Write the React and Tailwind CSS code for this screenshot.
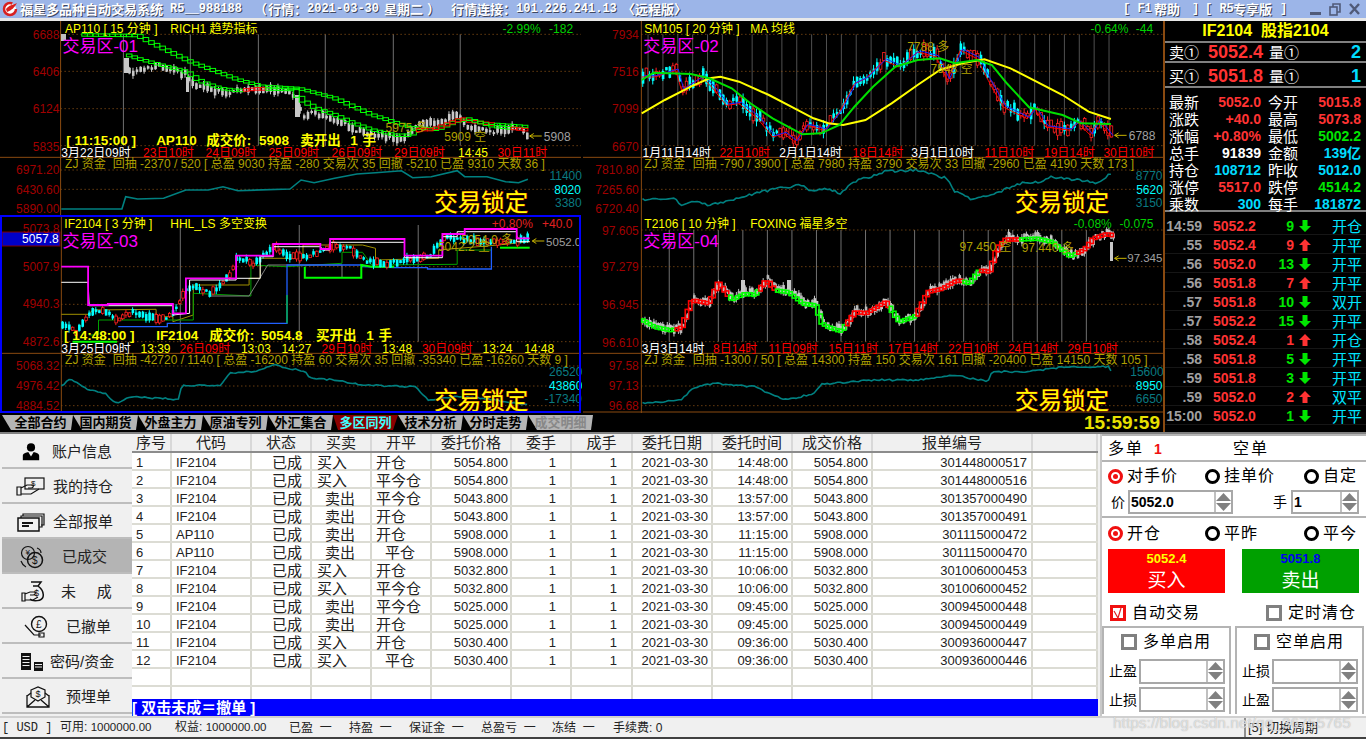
import React from 'react';

const FONT = "font-['Liberation_Sans','Noto_Sans_CJK_SC',sans-serif]";

// price paths are noted in crop coordinates: x / 2.69, y / 3
const pt = ([x, y]) => [x / 2.69, y / 3];
const line = (path) => path.map(pt).map(([x, y]) => `${x.toFixed(1)},${y.toFixed(1)}`).join(' ');

const rand = (seed) => {
  let s = seed;
  return () => {
    s = (s * 16807) % 2147483647;
    return s / 2147483647;
  };
};

const at = (path, x) => {
  for (let i = 1; i < path.length; i++) {
    if (x <= path[i][0]) {
      const [x0, y0] = path[i - 1];
      const [x1, y1] = path[i];
      return y0 + ((y1 - y0) * (x - x0)) / (x1 - x0 || 1);
    }
  }
  return path[path.length - 1][1];
};

const wiggle = (path, step, amp, seed) => {
  const r = rand(seed);
  const out = [];
  for (let x = path[0][0]; x <= path[path.length - 1][0]; x += step) {
    out.push([x, at(path, x) + (r() - 0.5) * amp]);
  }
  return out;
};

const Candles = ({ path, step, spread, body, seed, colors, hollow, bias = 0.5 }) => {
  const r = rand(seed);
  const items = [];
  for (let x = path[0][0]; x <= path[path.length - 1][0]; x += step) {
    const up = r() > bias;
    const mid = at(path, x) + (r() - 0.5) * spread;
    const h = 1 + r() * body;
    const wick = h + r() * body;
    const c = up ? colors[0] : colors[1];
    const px = x / 2.69;
    const py = mid / 3;
    items.push(
      <g key={x}>
        <line x1={px + 1} x2={px + 1} y1={py - wick} y2={py + wick} stroke={c} />
        <rect x={px} y={py - h} width={2.6} height={h * 2} fill={up && hollow ? '#000' : c} stroke={up && hollow ? c : 'none'} strokeWidth={0.8} />
      </g>
    );
  }
  return <g>{items}</g>;
};

const Ladder = ({ path, step, colorAt, h = 2.5, weight = 1 }) => {
  const items = [];
  for (let x = path[0][0]; x < path[path.length - 1][0]; x += step) {
    const y0 = at(path, x) / 3;
    const y1 = at(path, x + step) / 3;
    items.push(
      <rect key={x} x={x / 2.69} y={Math.min(y0, y1) - 1} width={step / 2.69} height={Math.max(h, Math.abs(y1 - y0) + 1)} fill="none" stroke={colorAt(x)} strokeWidth={weight} />
    );
  }
  return <g>{items}</g>;
};

const T = ({ x, y, fill = '#ffff00', size = 12, bold, anchor, children }) => (
  <text x={x / 2.69} y={y / 3} fill={fill} fontSize={size} fontWeight={bold ? 700 : 400} textAnchor={anchor} dominantBaseline="central">
    {children}
  </text>
);

const Lock = ({ x, y }) => (
  <text x={x / 2.69} y={y / 3} fontSize={23.5} fill="#ffff00" stroke="#e01000" strokeWidth={0.7} paintOrder="stroke" dominantBaseline="central">
    交易锁定
  </text>
);

const Arrow = ({ x, y }) => (
  <g stroke="#c8b400" fill="none">
    <line x1={x / 2.69} x2={x / 2.69 + 12} y1={y / 3} y2={y / 3} />
    <path d={`M${x / 2.69 + 4} ${y / 3 - 2.5}L${x / 2.69} ${y / 3}L${x / 2.69 + 4} ${y / 3 + 2.5}`} />
  </g>
);

const GREEN = '#00ff00';
const RED = '#ff0000';
const AXIS = '#a00000';
const OLIVE = '#b0a000';
const TEAL = '#008080';
const BROWN = '#8a4a10';
const TEAL_TXT = '#0a7a80';

const Frame = ({ axisX, sep, bottom, right, grid, lowGrid, vLines, vTop, vBottom, vColor = '#707070' }) => (
  <g>
    {vLines.map((x) => (
      <line key={x} x1={x / 2.69} x2={x / 2.69} y1={vTop / 3} y2={vBottom / 3} stroke={vColor} />
    ))}
    {[...grid, ...lowGrid].map((y) => (
      <line key={y} x1={axisX / 2.69} x2={right} y1={y / 3} y2={y / 3} stroke="#9a5a18" strokeDasharray="1 3" />
    ))}
    <line x1={axisX / 2.69} x2={axisX / 2.69} y1={0} y2={bottom} stroke={BROWN} />
    <line x1={0} x2={right} y1={sep / 3} y2={sep / 3} stroke={BROWN} />
  </g>
);

const Dates = ({ items, y }) => items.map(([x, s, c]) => <T key={s + x} x={x} y={y} fill={c} size={12}>{s}</T>);
const AxisLabels = ({ items, x }) => items.map(([s, y]) => <T key={s} x={x} y={y} fill={AXIS} anchor="end">{s}</T>);

const Pane1 = () => {
  const price = [[335, 190], [350, 215], [380, 205], [420, 195], [470, 215], [500, 225], [515, 250], [560, 265], [600, 285], [640, 270], [700, 268], [760, 272], [790, 285], [810, 345], [850, 340], [880, 355], [930, 370], [950, 395], [1000, 400], [1060, 415], [1100, 405], [1130, 365], [1180, 375], [1220, 340], [1260, 380], [1320, 395], [1390, 380], [1420, 405]];
  const upper = [[220, 104], [370, 106], [400, 125], [510, 185], [640, 240], [700, 258], [800, 265], [900, 295], [1000, 345], [1100, 382], [1180, 388], [1240, 360], [1320, 372], [1420, 380]];
  const lower = [[340, 165], [380, 180], [430, 195], [500, 215], [540, 245], [590, 265], [640, 272], [700, 266], [790, 268], [810, 300], [850, 325], [900, 345], [950, 370], [1000, 390], [1060, 405], [1105, 405], [1130, 388], [1170, 388], [1250, 355], [1320, 378], [1420, 390]];
  return (
    <svg viewBox="0 21 582 194" className="block w-[582px] h-[194px] bg-black">
      <Frame axisX={163} sep={472} bottom={215} right={581} grid={[103, 214, 326, 437]} lowGrid={[510, 568]} vLines={[332, 512, 695, 875, 1058, 1238]} vTop={103} vBottom={437} />
      <rect x={61} y={34} width={5} height={7} fill="#c0c0c0" />
      <Candles path={price} step={10} spread={14} body={3} seed={77} colors={['#c8c8c8', '#c8c8c8']} />
      <rect x={124} y={58} width={5} height={15} fill="#c8c8c8" />
      <rect x={186} y={77} width={3} height={15} fill="#c8c8c8" />
      <rect x={295} y={95} width={5} height={22} fill="#c8c8c8" />
      <Ladder path={upper} step={15} colorAt={(x) => (x > 1240 && x < 1320 ? RED : GREEN)} />
      <Ladder path={lower} step={15} colorAt={(x) => ((x > 645 && x < 705) || (x > 1105 && x < 1250) || (x > 1370 && x < 1410) ? RED : GREEN)} />
      <T x={175} y={88}>AP110 [ 15 分钟 ]</T>
      <T x={458} y={88}>RICH1 趋势指标</T>
      <T x={1352} y={88} fill="#00d000">-2.99%</T>
      <T x={1477} y={88} fill="#00d000">-182</T>
      <AxisLabels x={160} items={[['6688', 105], ['6406', 216], ['6124', 328], ['5835', 441], ['6971.20', 510], ['6430.60', 570], ['5890.00', 627]]} />
      <T x={168} y={140} fill="#ff00ff" size={17}>交易区-01</T>
      <T x={1037} y={385} fill={OLIVE}>5975 多</T>
      <T x={1195} y={410} fill={OLIVE}>5909 空</T>
      <Arrow x={1425} y={408} />
      <T x={1463} y={411} fill="#a0a0a0">5908</T>
      <T x={178} y={420} size={13.5} bold>[ 11:15:00 ]</T>
      <T x={420} y={420} size={13.5} bold>AP110</T>
      <T x={555} y={420} size={13.5} bold>成交价:</T>
      <T x={697} y={420} size={13.5} bold>5908</T>
      <T x={808} y={420} size={13.5} bold>卖开出</T>
      <T x={942} y={420} size={13.5} bold>1</T>
      <T x={975} y={420} size={13.5} bold>手</T>
      <Dates y={460} items={[[165, '3月22日09时', '#fff'], [385, '23日10时', RED], [553, '24日09时', RED], [722, '25日09时', RED], [892, '26日09时', RED], [1060, '29日09时', RED], [1232, '14:45', '#ffff00'], [1338, '30日11时', RED]]} />
      <T x={175} y={492} fill={OLIVE}>ZJ 资金</T>
      <T x={303} y={492} fill={OLIVE}>回抽 -2370 / 520 [ 总盈 9030  持盈 -280  交易次 35  回撤 -5210  已盈 9310  天数 36 ]</T>
      <polyline points={line([[165, 627], [328, 627], [338, 590], [370, 597], [440, 595], [500, 570], [560, 570], [600, 560], [640, 572], [780, 567], [810, 540], [845, 548], [900, 535], [960, 522], [1010, 518], [1080, 512], [1110, 533], [1160, 530], [1230, 512], [1250, 530], [1310, 530], [1360, 545], [1395, 548], [1420, 538]])} fill="none" stroke={TEAL} strokeWidth={1.6} />
      <T x={1478} y={528} fill={TEAL_TXT}>11400</T>
      <T x={1491} y={570} fill="#00ffff">8020</T>
      <T x={1493} y={608} fill={TEAL_TXT}>3380</T>
      <Lock x={1168} y={610} />
    </svg>
  );
};

const Pane2 = () => {
  const price = [[158, 225], [190, 225], [250, 205], [265, 265], [320, 225], [350, 260], [385, 310], [420, 305], [470, 350], [510, 405], [540, 395], [570, 420], [600, 370], [650, 385], [690, 330], [730, 245], [760, 230], [810, 175], [850, 195], [900, 150], [950, 165], [980, 235], [1015, 145], [1060, 170], [1090, 235], [1130, 315], [1195, 350], [1215, 320], [1245, 375], [1310, 385], [1330, 360], [1365, 400], [1385, 355], [1420, 405]];
  const shifted = price.map(([x, y]) => [x, y + 6]);
  const vLines = [];
  for (let x = 175; x < 1440; x += 40) vLines.push(x);
  return (
    <svg viewBox="-1 21 581 194" className="block w-[581px] h-[194px] bg-black">
      <Frame axisX={157} sep={472} bottom={215} right={581} grid={[103, 214, 326, 437]} lowGrid={[510, 568]} vLines={vLines} vTop={103} vBottom={437} vColor="#505050" />
      <Candles path={price} step={9} spread={20} body={5} seed={311} colors={['#ff2020', '#00ffff']} hollow bias={0.65} />
      <polyline points={line(shifted)} fill="none" stroke="#ff0000" />
      <polyline points={line(price.map(([x, y]) => [x + 6, y + 2]))} fill="none" stroke="#2020ff" />
      <polyline points={line([[158, 340], [220, 300], [290, 260], [340, 235], [370, 230], [420, 245], [500, 285], [560, 320], [620, 355], [660, 370], [700, 375], [760, 360], [830, 310], [900, 255], [960, 210], [1020, 190], [1080, 178], [1150, 205], [1220, 245], [1290, 285], [1360, 335], [1420, 357]])} fill="none" stroke="#ffff00" strokeWidth={2} />
      <polyline points={line([[158, 240], [190, 218], [290, 222], [340, 235], [400, 265], [450, 310], [510, 355], [560, 385], [590, 403], [640, 400], [690, 375], [730, 320], [780, 260], [840, 200], [900, 180], [960, 175], [1000, 190], [1060, 180], [1100, 195], [1140, 250], [1200, 322], [1290, 345], [1340, 370], [1420, 372]])} fill="none" stroke="#00e000" strokeWidth={2} />
      <T x={165} y={88}>SM105 [ 20 分钟 ]</T>
      <T x={450} y={88}>MA 均线</T>
      <T x={1365} y={88} fill="#00d000">-0.64%</T>
      <T x={1487} y={88} fill="#00d000">-44</T>
      <AxisLabels x={150} items={[['7934', 105], ['7516', 216], ['7099', 328], ['6670', 441], ['7810.80', 510], ['7265.60', 570], ['6720.40', 627]]} />
      <T x={162} y={138} fill="#ff00ff" size={17}>交易区-02</T>
      <T x={872} y={140} fill={OLIVE}>7788 多</T>
      <T x={935} y={208} fill={OLIVE}>7548 空</T>
      <Arrow x={1430} y={406} />
      <T x={1468} y={408} fill="#a0a0a0">6788</T>
      <Dates y={460} items={[[160, '1月11日14时', '#fff'], [367, '22日10时', RED], [528, '2月1日14时', '#fff'], [725, '18日14时', RED], [883, '3月1日10时', '#fff'], [1080, '11日10时', RED], [1240, '19日14时', RED], [1400, '30日10时', RED]]} />
      <T x={165} y={492} fill={OLIVE}>ZJ 资金</T>
      <T x={295} y={492} fill={OLIVE}>回抽 -790 / 3900 [ 总盈 7980  持盈 3790  交易次 33  回撤 -2960  已盈 4190  天数 173 ]</T>
      <polyline points={line(wiggle([[160, 600], [250, 595], [265, 620], [290, 605], [340, 615], [400, 600], [480, 575], [530, 565], [590, 555], [610, 575], [650, 565], [690, 580], [730, 545], [810, 515], [900, 510], [980, 535], [1000, 575], [1050, 600], [1120, 575], [1190, 545], [1230, 550], [1260, 530], [1340, 540], [1380, 550], [1420, 520]], 7, 8, 51))} fill="none" stroke={TEAL} strokeWidth={1.6} />
      <T x={1487} y={528} fill={TEAL_TXT}>8770</T>
      <T x={1488} y={570} fill="#00ffff">5620</T>
      <T x={1487} y={608} fill={TEAL_TXT}>3150</T>
      <Lock x={1162} y={610} />
    </svg>
  );
};

const Pane3 = () => {
  const price = [[165, 330], [200, 350], [240, 290], [290, 290], [310, 320], [350, 290], [400, 310], [450, 310], [490, 240], [510, 210], [560, 235], [610, 190], [635, 130], [680, 145], [735, 95], [770, 125], [820, 125], [880, 95], [940, 100], [980, 135], [1040, 145], [1100, 135], [1150, 125], [1190, 70], [1230, 70], [1300, 80], [1350, 80], [1420, 72]];
  return (
    <svg viewBox="0 0 582 198" className="block w-[582px] h-[198px] bg-black">
      <Frame axisX={165} sep={415} bottom={198} right={581} grid={[155, 268, 380]} lowGrid={[453, 513, 572]} vLines={[485, 805, 1125]} vTop={30} vBottom={380} />
      <polyline points={line([[165, 298], [237, 298], [250, 285], [420, 283], [420, 305], [465, 305], [465, 320], [520, 300], [520, 210], [670, 210], [670, 190], [700, 190], [700, 130], [815, 130], [815, 90], [975, 90], [1010, 100], [1010, 135], [1180, 130], [1180, 105], [1340, 90], [1425, 80]])} fill="none" stroke="#a09000" />
      <polyline points={line([[240, 360], [265, 360], [265, 315], [520, 315], [520, 235], [675, 243], [675, 150], [770, 155], [920, 145], [920, 112], [975, 112], [1000, 150], [1230, 148], [1230, 105], [1322, 105]])} fill="none" stroke="#00a000" />
      <polyline points={line([[560, 243], [670, 243], [720, 150], [920, 150], [920, 188]])} fill="none" stroke="#808080" />
      <polyline points={line([[318, 335], [450, 335], [450, 325], [772, 325], [772, 150], [975, 150], [975, 155], [1063, 158], [1150, 158], [1150, 162], [1322, 162], [1322, 95]])} fill="none" stroke="#2060ff" strokeWidth={1.3} />
      <polyline points={line([[772, 240], [772, 325]])} fill="none" stroke="#00c040" strokeWidth={1.3} />
      <polyline points={line([[195, 380], [315, 380]])} fill="none" stroke={GREEN} strokeWidth={2} />
      <polyline points={line([[820, 155], [820, 188], [972, 188], [972, 150], [1000, 155], [1060, 155]])} fill="none" stroke={GREEN} strokeWidth={2} />
      <polyline points={line([[1345, 98], [1425, 98]])} fill="none" stroke={GREEN} strokeWidth={2} />
      <Candles path={price} step={9} spread={12} body={3} seed={901} colors={['#ff2020', '#00ffff']} hollow bias={0.6} />
      <polyline points={line([[165, 202], [237, 202], [240, 272], [465, 272], [465, 300], [510, 295], [510, 195], [635, 195], [635, 190], [700, 190], [700, 125], [735, 125], [735, 95], [862, 95], [870, 105], [888, 105], [888, 82], [1088, 82], [1088, 128], [1190, 128], [1190, 65], [1230, 65], [1230, 50], [1390, 50], [1390, 80], [1425, 80]])} fill="none" stroke="#ffffff" />
      <polyline points={line([[165, 155], [237, 155], [237, 270], [290, 270], [290, 267], [465, 267], [465, 295], [500, 295], [500, 190], [635, 190], [635, 122], [735, 122], [735, 87], [862, 87], [862, 102], [888, 102], [888, 72], [1088, 72], [1088, 122], [1190, 122], [1190, 57], [1250, 57], [1250, 42], [1390, 42], [1390, 70], [1425, 70]])} fill="none" stroke="#ff00ff" strokeWidth={1.8} />
      <rect x={2} y={17} width={58} height={14} fill="#0000c8" stroke="#800000" />
      <T x={158} y={72} fill="#fff" anchor="end">5057.8</T>
      <T x={173} y={28}>IF2104 [ 3 分钟 ]</T>
      <T x={458} y={28}>HHL_LS 多空变换</T>
      <T x={1323} y={28} fill="#e02020">+0.80%</T>
      <T x={1458} y={28} fill="#e02020">+40.0</T>
      <AxisLabels x={160} items={[['5073.8', 42], ['5007.9', 155], ['4940.3', 268], ['4872.6', 382], ['5068.32', 452], ['4976.42', 513], ['4884.52', 572]]} />
      <T x={168} y={80} fill="#ff00ff" size={17}>交易区-03</T>
      <T x={1240} y={75} fill={OLIVE}>5054.0 多</T>
      <T x={1178} y={97} fill={OLIVE}>5042.2 空</T>
      <Arrow x={1432} y={78} />
      <T x={1469} y={82} fill="#a0a0a0" size={11.5}>5052.0</T>
      <T x={172} y={362} size={13.5} bold>[ 14:48:00 ]</T>
      <T x={420} y={362} size={13.5} bold>IF2104</T>
      <T x={563} y={362} size={13.5} bold>成交价:</T>
      <T x={703} y={362} size={13.5} bold>5054.8</T>
      <T x={850} y={362} size={13.5} bold>买开出</T>
      <T x={985} y={362} size={13.5} bold>1</T>
      <T x={1018} y={362} size={13.5} bold>手</T>
      <Dates y={402} items={[[165, '3月25日09时', '#fff'], [378, '13:39', '#ffff00'], [483, '26日09时', RED], [648, '13:03', '#ffff00'], [757, '14:27', '#ffff00'], [865, '29日10时', RED], [1028, '13:48', '#ffff00'], [1135, '30日09时', RED], [1298, '13:24', '#ffff00'], [1410, '14:48', '#ffff00']]} />
      <T x={175} y={435} fill={OLIVE}>ZJ 资金</T>
      <T x={303} y={435} fill={OLIVE}>回抽 -42720 / 1140 [ 总盈 -16200  持盈 60  交易次 35  回撤 -35340  已盈 -16260  天数 9 ]</T>
      <polyline points={line(wiggle([[165, 515], [190, 490], [230, 520], [285, 535], [310, 565], [350, 545], [480, 553], [490, 510], [590, 513], [620, 475], [680, 470], [740, 450], [820, 470], [835, 490], [900, 495], [970, 510], [1120, 515], [1150, 555], [1230, 545], [1300, 550], [1420, 570]], 7, 5, 73))} fill="none" stroke={TEAL} strokeWidth={1.6} />
      <T x={1477} y={470} fill={TEAL_TXT}>26520</T>
      <T x={1477} y={512} fill="#00ffff">43860</T>
      <T x={1465} y={552} fill={TEAL_TXT}>-17340</T>
      <Lock x={1168} y={558} />
      <rect x={1} y={1} width={579} height={196} fill="none" stroke="#0000ff" strokeWidth={2} />
    </svg>
  );
};

const Pane4 = () => {
  const price = [[158, 315], [190, 335], [235, 345], [265, 340], [295, 255], [340, 265], [365, 205], [400, 255], [440, 235], [465, 240], [495, 195], [515, 225], [550, 230], [590, 265], [625, 270], [645, 330], [695, 350], [735, 290], [765, 295], [815, 262], [850, 320], [895, 305], [930, 230], [970, 220], [1010, 195], [1040, 205], [1070, 165], [1095, 170], [1115, 100], [1140, 72], [1175, 72], [1220, 70], [1260, 80], [1310, 125], [1350, 105], [1375, 70], [1415, 55], [1425, 65]];
  const isRed = (x) => (x > 240 && x < 385) || (x > 470 && x < 515) || (x > 700 && x < 820) || (x > 895 && x < 1015) || (x > 1060 && x < 1170) || x > 1320;
  const vLines = [];
  for (let x = 232; x < 1400; x += 66) vLines.push(x);
  return (
    <svg viewBox="-1 0 581 198" className="block w-[581px] h-[198px] bg-black">
      <Frame axisX={157} sep={415} bottom={198} right={581} grid={[45, 155, 268, 380]} lowGrid={[453, 513, 572]} vLines={vLines} vTop={45} vBottom={380} />
      <Candles path={price.map(([x, y]) => [x, y - 4])} step={6} spread={16} body={3} seed={4242} colors={['#c8c8c8', '#b8b8b8']} />
      <rect x={527} y={27} width={3} height={19} fill="#c8c8c8" />
      <rect x={158} y={65} width={4} height={14} fill="#c8c8c8" />
      <rect x={204} y={65} width={4} height={13} fill="#c8c8c8" />
      <Ladder path={price} step={9} colorAt={(x) => (isRed(x) ? RED : GREEN)} h={3} weight={1.6} />
      <T x={165} y={28}>T2106 [ 10 分钟 ]</T>
      <T x={450} y={28}>FOXING 福星多空</T>
      <T x={1320} y={28} fill="#00d000">-0.08%</T>
      <T x={1443} y={28} fill="#00d000">-0.075</T>
      <AxisLabels x={150} items={[['97.605', 47], ['97.279', 157], ['96.945', 270], ['96.610', 385], ['97.58', 452], ['97.13', 513], ['96.68', 572]]} />
      <T x={162} y={80} fill="#ff00ff" size={17}>交易区-04</T>
      <T x={1013} y={97} fill={OLIVE}>97.450 空</T>
      <T x={1180} y={100} fill={OLIVE}>97.440 多</T>
      <rect x={527} y={32} width={3} height={11} fill="#c8c8c8" />
      <Arrow x={1430} y={130} />
      <T x={1464} y={130} fill="#a0a0a0" size={11.5}>97.345</T>
      <Dates y={402} items={[[158, '3月3日14时', '#fff'], [350, '8日14时', RED], [498, '11日09时', RED], [660, '15日11时', RED], [820, '17日14时', RED], [982, '22日10时', RED], [1143, '24日14时', RED], [1303, '29日10时', RED]]} />
      <T x={165} y={435} fill={OLIVE}>ZJ 资金</T>
      <T x={295} y={435} fill={OLIVE}>回抽 -1300 / 50 [ 总盈 14300  持盈 150  交易次 161  回撤 -20400  已盈 14150  天数 105 ]</T>
      <polyline points={line(wiggle([[160, 565], [265, 555], [295, 520], [350, 505], [460, 515], [520, 545], [550, 555], [620, 535], [640, 508], [780, 495], [900, 495], [1000, 480], [1090, 500], [1100, 470], [1200, 470], [1300, 455], [1415, 455], [1422, 470]], 7, 5, 97))} fill="none" stroke={TEAL} strokeWidth={1.6} />
      <T x={1472} y={470} fill={TEAL_TXT}>15600</T>
      <T x={1487} y={512} fill="#00ffff">8950</T>
      <T x={1487} y={552} fill={TEAL_TXT}>6650</T>
      <Lock x={1162} y={558} />
      <line x1={0} x2={581} y1={197} y2={197} stroke={BROWN} />
    </svg>
  );
};

const tabs = ['全部合约', '国内期货', '外盘主力', '原油专列', '外汇集合', '多区同列', '技术分析', '分时走势', '成交明细'];

const TabBar = () => (
  <div className="flex h-[19px] items-stretch bg-black">
    <div className="flex pl-[2px] py-[2px] w-[1083px]">
      {tabs.map((t, i) => (
        <div
          key={t}
          className={`flex items-center justify-center text-[13px] leading-none font-bold ${i === 0 ? 'w-[71px] pl-[6px]' : 'w-[65px]'} ${
            i === 5
              ? 'bg-[#8b0000] text-[#40ffff] [clip-path:polygon(0_0,100%_0,calc(100%-5px)_100%,5px_100%)]'
              : 'bg-[#b4b4b4] [clip-path:polygon(0_0,100%_0,calc(100%-2px)_100%,9px_100%)]'
          } ${i === 8 ? 'text-[#888888]' : i === 5 ? '' : 'text-black'}`}
        >
          {t}
        </div>
      ))}
    </div>
    <div className="w-[77px] flex items-center justify-end text-[19px] leading-none font-bold text-[#e8e000]">15:59:59</div>
  </div>
);

const quote = [
  ['最新', '5052.0', '#ff3333', '今开', '5015.8', '#ff3333'],
  ['涨跌', '+40.0', '#ff3333', '最高', '5073.8', '#ff3333'],
  ['涨幅', '+0.80%', '#ff3333', '最低', '5002.2', '#00e600'],
  ['总手', '91839', '#ffffff', '金额', '139亿', '#00dcff'],
  ['持仓', '108712', '#00dcff', '昨收', '5012.0', '#00dcff'],
  ['涨停', '5517.0', '#ff3333', '跌停', '4514.2', '#00e600'],
  ['乘数', '300', '#00dcff', '每手', '181872', '#00dcff'],
];

const ticks = [
  ['14:59', '5052.2', '9', 0, '开仓'],
  ['.55', '5052.4', '9', 1, '开平'],
  ['.56', '5052.0', '13', 0, '开平'],
  ['.56', '5051.8', '7', 1, '开平'],
  ['.57', '5051.8', '10', 0, '双开'],
  ['.57', '5052.2', '15', 0, '开平'],
  ['.58', '5052.4', '1', 1, '开仓'],
  ['.58', '5051.8', '5', 0, '开平'],
  ['.59', '5051.8', '3', 0, '开平'],
  ['.59', '5052.0', '2', 1, '双平'],
  ['15:00', '5052.0', '1', 0, '开平'],
];

const TickArrow = ({ up }) => (
  <svg width="12" height="12" viewBox="0 0 12 12">
    <path d={up ? 'M6 0L12 6H8.5V12H3.5V6H0Z' : 'M6 12L12 6H8.5V0H3.5V6H0Z'} fill={up ? '#ff3333' : '#00e600'} />
  </svg>
);

const BidAsk = ({ label, price, qty }) => (
  <div className="grid grid-cols-[34px_60px_38px_60px] items-center h-[20px] pl-[4px] text-[15px] leading-none text-white">
    <span>{label}</span>
    <span className="text-right text-[18px] font-bold text-[#ff3333]">{price}</span>
    <span className="pl-[6px]">量①</span>
    <span className="text-right text-[18px] font-bold text-[#00dcff]">{qty}</span>
  </div>
);

const QuotePanel = () => (
  <div className="w-[203px] h-[411px] bg-black border-l-2 border-[#8a4a10] flex flex-col overflow-hidden">
    <div className="h-[22px] shrink-0 flex items-center justify-center text-base leading-none font-bold text-[#ffff00] border-b-2 border-[#808080] whitespace-pre">IF2104  股指2104</div>
    <div className="h-[20px] shrink-0 flex flex-col justify-center border-b-2 border-[#808080]"><BidAsk label="卖①" price="5052.4" qty="2" /></div>
    <div className="h-[25px] shrink-0 pt-[3px] flex flex-col justify-center border-b-2 border-[#808080]"><BidAsk label="买①" price="5051.8" qty="1" /></div>
    <div className="h-[124px] shrink-0 pt-[4px] flex flex-col border-b-2 border-[#808080]">
      {quote.map((r) => (
        <div key={r[0]} className="grid grid-cols-[34px_58px_40px_60px] items-center h-[17px] pl-[4px] text-[15px] leading-none text-white">
          <span>{r[0]}</span>
          <span className="text-right text-sm font-bold" style={{ color: r[2] }}>{r[1]}</span>
          <span className="pl-[7px]">{r[3]}</span>
          <span className="text-right text-sm font-bold" style={{ color: r[5] }}>{r[4]}</span>
        </div>
      ))}
    </div>
    <div className="flex-1 pt-[4px] flex flex-col">
      {ticks.map((t, i) => (
        <div key={i} className="grid grid-cols-[36px_54px_38px_18px_50px] items-center h-[19px] border-b border-[#161616] pl-[1px] leading-none">
          <span className="text-right text-sm font-bold text-[#a0a0a0]">{t[0]}</span>
          <span className="pl-[11px] text-sm font-bold text-[#ff3333]">{t[1]}</span>
          <span className={`text-right text-sm font-bold ${t[3] ? 'text-[#ff3333]' : 'text-[#00e600]'}`}>{t[2]}</span>
          <span className="pl-[5px] flex"><TickArrow up={t[3]} /></span>
          <span className="text-right text-[15px] text-[#00e5ff]">{t[4]}</span>
        </div>
      ))}
    </div>
  </div>
);

const MONO = "font-['Liberation_Mono'] text-xs";

const TitleBar = () => (
  <div className="h-[21px] border-b-[3px] border-[#e8e8e8] bg-[#9cb5e8] flex items-center text-white text-[13px] leading-none font-bold [text-shadow:1px_1px_0_#404860] whitespace-pre">
    <svg width="16" height="16" viewBox="0 0 16 16" className="ml-[2px] mr-[2px] shrink-0">
      <circle cx="8" cy="8" r="6" fill="#fff" stroke="#d82020" strokeWidth="2.5" strokeDasharray="30 8" />
      <path d="M4 8C7 4 11 4 15 2C12 7 10 9 5 11Z" fill="#d82020" />
    </svg>
    <span className="w-[150px]">福星多品种自动交易系统</span>
    <span className={`w-[84px] ${MONO}`}>R5__988188</span>
    <span className="w-[14px]">（</span>
    <span className="w-[39px]">行情：</span>
    <span className={`w-[77px] ${MONO}`}>2021-03-30</span>
    <span className="w-[43px]">星期二</span>
    <span className="w-[24px]">）</span>
    <span className="w-[65px]">行情连接：</span>
    <span className={`w-[106px] ${MONO}`}>101.226.241.13</span>
    <span>〈远程版〉</span>
    <span className="flex-1" />
    <span className={`w-[31px] ${MONO}`}>[ F1</span>
    <span className="w-[38px]">帮助</span>
    <span className={`w-[13px] ${MONO}`}>]</span>
    <span className={`w-[28px] ${MONO}`}>[ R5</span>
    <span className="w-[47px]">专享版</span>
    <div className="w-[86px] flex items-center">
      <span className={`${MONO} flex-1`}>]</span>
      <div className="flex items-center gap-[8px] pr-[6px] text-[#505a78]">
        <svg width="11" height="14" viewBox="0 0 11 14"><rect y="10" width="11" height="3" fill="currentColor" /></svg>
        <svg width="12" height="13" viewBox="0 0 12 13" fill="none" stroke="currentColor" strokeWidth="1.6"><rect x="1" y="4" width="7" height="8" /><path d="M4 4V1H11V9H8" /></svg>
        <svg width="11" height="12" viewBox="0 0 11 12" stroke="currentColor" strokeWidth="2.4"><path d="M1 1L10 11M10 1L1 11" /></svg>
      </div>
    </div>
  </div>
);

const NavIcon = ({ kind }) => {
  const s = { fill: 'none', stroke: '#111', strokeWidth: 1.2 };
  if (kind === 0)
    return (
      <svg width="20" height="20" viewBox="0 0 22 22">
        <circle cx="11" cy="6" r="4.5" fill="#000" />
        <path d="M2 20V15C2 12.5 6 11.5 8 11L11 16L14 11C16 11.5 20 12.5 20 15V20Z" fill="#000" />
      </svg>
    );
  if (kind === 1)
    return (
      <svg width="30" height="22" viewBox="0 0 30 22" {...s}>
        <rect x="9" y="2" width="19" height="11" />
        <path d="M1 11H5V19H1ZM5 12L11 9H17C18 10 17 12 15 12H12M5 18H15L23 13" />
        <text x="15" y="10" fontSize="8" fill="#111" stroke="none">$</text>
      </svg>
    );
  if (kind === 2)
    return (
      <svg width="28" height="21" viewBox="0 0 28 21" {...s}>
        <path d="M6 5V3H27V14H24M4 7V5H25V16H22" />
        <rect x="1" y="7" width="21" height="13" strokeWidth="1.5" />
        <path d="M5 12H16M5 15H12" strokeWidth="2" />
      </svg>
    );
  if (kind === 3)
    return (
      <svg width="24" height="24" viewBox="0 0 24 24" {...s}>
        <circle cx="8" cy="8" r="6.5" />
        <circle cx="15" cy="15" r="7.5" strokeWidth="1.5" />
        <text x="5.5" y="10" fontSize="8" fill="#111" stroke="none">¥</text>
        <text x="12" y="19" fontSize="10" fill="#111" stroke="none">$</text>
        <path d="M17 3C20 4 21 6 21 8M1 16C2 19 4 21 6 22" />
      </svg>
    );
  if (kind === 4)
    return (
      <svg width="24" height="22" viewBox="0 0 24 22" {...s}>
        <path d="M10 1H20L17 5C21 8 23 12 22 16C21 20 12 21 9 18M12 5H17" strokeWidth="1.5" />
        <text x="13" y="15" fontSize="9" fill="#111" stroke="none">$</text>
        <path d="M1 12H4V20H1ZM4 13L9 11H14C15 12 14 14 12 14H9M4 19H12L17 16" />
      </svg>
    );
  if (kind === 5)
    return (
      <svg width="26" height="24" viewBox="0 0 26 24" {...s}>
        <circle cx="15" cy="9" r="7.5" strokeWidth="1.4" />
        <text x="12" y="13" fontSize="10" fill="#111" stroke="none">£</text>
        <path d="M1 10L10 20L17 20M15 18H20V22H15Z" />
      </svg>
    );
  if (kind === 6)
    return (
      <svg width="24" height="20" viewBox="0 0 24 20" fill="#111">
        <path d="M1 1H11V18H1ZM2.5 4V5H9.5V4ZM2.5 7V8H9.5V7ZM2.5 10V11H9.5V10ZM2.5 13V14H9.5V13Z" fillRule="evenodd" />
        <path d="M14 10H23V19H14ZM15 12V13H22V12ZM15 14.5V15.5H22V14.5Z" fillRule="evenodd" />
      </svg>
    );
  return (
    <svg width="24" height="22" viewBox="0 0 24 22" {...s}>
      <path d="M1 9V21H23V9M1 10L5 7M23 10L19 7M1 21L9 14M23 21L15 14" strokeWidth="1.3" />
      <path d="M5 4L12 1L19 4V11L12 15L5 11Z" />
      <text x="9.5" y="11" fontSize="9" fill="#111" stroke="none">$</text>
    </svg>
  );
};

const navItems = [
  { label: '账户信息', icon: 'w-[29px] ml-[14px]', text: 'pl-[7px]' },
  { label: '我的持仓', icon: 'w-[30px] ml-[14px]', text: 'pl-[7px]' },
  { label: '全部报单', icon: 'w-[28px] ml-[15px]', text: 'pl-[8px]' },
  { label: '已成交', icon: 'w-[24px] ml-[18px]', text: 'pl-[18px]', active: true },
  { label: '未     成', icon: 'w-[24px] ml-[19px]', text: 'pl-[16px]' },
  { label: '已撤单', icon: 'w-[26px] ml-[22px]', text: 'pl-[16px]' },
  { label: '密码/资金', icon: 'w-[24px] ml-[18px]', text: 'pl-[6px]' },
  { label: '预埋单', icon: 'w-[24px] ml-[24px]', text: 'pl-[16px]' },
];

const SideNav = () => (
  <div className="w-[130px] ml-[2px] flex flex-col shrink-0 bg-[#f0f0f0]">
    {navItems.map((n, i) => (
      <div key={n.label} className={`h-[35px] pt-[2px] flex items-center border-b-2 border-[#bdbdbd] text-[15px] leading-none text-[#222] whitespace-pre ${n.active ? 'bg-[#b4b4b4]' : ''}`}>
        <div className={`flex justify-center shrink-0 ${n.icon}`}><NavIcon kind={i} /></div>
        <span className={n.text}>{n.label}</span>
      </div>
    ))}
  </div>
);

const rows = [
  ['1', 'IF2104', '买入', 0, '开仓', 'pl-[4px]', '5054.800', '14:48:00', '301448000517'],
  ['2', 'IF2104', '买入', 0, '平今仓', 'pl-[4px]', '5054.800', '14:48:00', '301448000516'],
  ['3', 'IF2104', '卖出', 1, '平今仓', 'pl-[4px]', '5043.800', '13:57:00', '301357000490'],
  ['4', 'IF2104', '卖出', 1, '开仓', 'pl-[4px]', '5043.800', '13:57:00', '301357000491'],
  ['5', 'AP110', '卖出', 1, '开仓', 'pl-[4px]', '5908.000', '11:15:00', '301115000472'],
  ['6', 'AP110', '卖出', 1, '平仓', 'pl-[13px]', '5908.000', '11:15:00', '301115000470'],
  ['7', 'IF2104', '买入', 0, '开仓', 'pl-[4px]', '5032.800', '10:06:00', '301006000453'],
  ['8', 'IF2104', '买入', 0, '平今仓', 'pl-[4px]', '5032.800', '10:06:00', '301006000452'],
  ['9', 'IF2104', '卖出', 1, '平今仓', 'pl-[4px]', '5025.000', '09:45:00', '300945000448'],
  ['10', 'IF2104', '卖出', 1, '开仓', 'pl-[4px]', '5025.000', '09:45:00', '300945000449'],
  ['11', 'IF2104', '买入', 0, '开仓', 'pl-[4px]', '5030.400', '09:36:00', '300936000447'],
  ['12', 'IF2104', '买入', 0, '平仓', 'pl-[13px]', '5030.400', '09:36:00', '300936000446'],
];

const COLS = 'grid grid-cols-[40px_80px_60px_60px_60px_80px_60px_61px_80px_80px_80px_160px_65px] grid-rows-[1fr]';
const heads = ['序号', '代码', '状态', '买卖', '开平', '委托价格', '委手', '成手', '委托日期', '委托时间', '成交价格', '报单编号', ''];
const cellLine = 'border-r-2 border-[#d8d8d0] h-[16px] pt-[2px] leading-none flex items-center';

const OrderTable = () => (
  <div className="flex-1 flex flex-col min-w-0 h-full">
    <div className="flex-1 bg-white overflow-hidden">
      <div className={`${COLS} h-[19px] bg-[#f0f0f0] border-b-2 border-[#8c8c8c] text-[15px] leading-none text-[#222]`}>
        {heads.map((h, i) => (
          <div key={i} className="border-r-2 border-[#d8d8d8] flex items-center justify-center">{h}</div>
        ))}
      </div>
      {rows.map((r) => (
        <div key={r[0]} className={`${COLS} h-[18px] border-b-2 border-[#dcdcd4] text-[13px] text-[#222]`}>
          <div className={`${cellLine} pl-[4px]`}>{r[0]}</div>
          <div className={`${cellLine} pl-[4px]`}>{r[1]}</div>
          <div className={`${cellLine} pl-[20px] text-[15px]`}>已成</div>
          <div className={`${cellLine} text-[15px] ${r[3] ? 'pl-[13px]' : 'pl-[5px]'}`}>{r[2]}</div>
          <div className={`${cellLine} text-[15px] ${r[5]}`}>{r[4]}</div>
          <div className={`${cellLine} justify-end pr-[2px]`}>{r[6]}</div>
          <div className={`${cellLine} justify-end pr-[14px]`}>1</div>
          <div className={`${cellLine} justify-end pr-[14px]`}>1</div>
          <div className={`${cellLine} justify-end pr-[3px]`}>2021-03-30</div>
          <div className={`${cellLine} justify-end pr-[3px]`}>{r[7]}</div>
          <div className={`${cellLine} justify-end pr-[3px]`}>{r[6]}</div>
          <div className={`${cellLine} justify-end pr-[4px]`}>{r[8]}</div>
          <div className={cellLine} />
        </div>
      ))}
      {[0, 1].map((k) => (
        <div key={k} className={`${COLS} h-[18px] border-b-2 border-[#dcdcd4]`}>
          {heads.map((h, i) => (
            <div key={i} className={cellLine} />
          ))}
        </div>
      ))}
    </div>
    <div className="h-[17px] shrink-0 bg-[#0000ff] text-white text-[15px] leading-none font-bold flex items-center whitespace-pre">[ 双击未成＝撤单 ]</div>
  </div>
);

const Radio = ({ on, label, className }) => (
  <div className={`flex items-center gap-[4px] text-base leading-none tracking-[1px] ${className}`}>
    <span className={`w-[15px] h-[15px] rounded-full border-[3px] flex items-center justify-center ${on ? 'border-[#f01010]' : 'border-black'}`}>
      {on && <span className="w-[5px] h-[5px] rounded-full bg-[#f01010]" />}
    </span>
    {label}
  </div>
);

const Spin = ({ value, className }) => (
  <div className={`flex border-2 border-[#a8a8a8] bg-white ${className}`}>
    <div className="flex-1 flex items-center pl-[1px] text-sm leading-none font-bold">{value}</div>
    <div className="w-[17px] border-l-2 border-[#c0c0c0] flex flex-col items-center justify-center gap-[2px]">
      <svg width="15" height="8" viewBox="0 0 15 8"><path d="M7.5 0L15 8H0Z" fill="#808080" /></svg>
      <svg width="15" height="8" viewBox="0 0 15 8"><path d="M7.5 8L15 0H0Z" fill="#808080" /></svg>
    </div>
  </div>
);

const Check = ({ on, className }) => (
  <span className={`w-[16px] h-[16px] border-[3px] flex items-center justify-center shrink-0 ${on ? 'border-[#f01010]' : 'border-[#808080]'} ${className || ''}`}>
    {on && (
      <svg width="10" height="10" viewBox="0 0 10 10" fill="none" stroke="#e02020" strokeWidth="1.2"><path d="M1 3L5 10L8 0" /></svg>
    )}
  </span>
);

const StopBox = ({ title, a, b }) => (
  <div className="w-[129px] h-[88px] border-2 border-b-0 border-[#b4b4b4] flex flex-col pl-[5px]">
    <div className="h-[29px] flex items-center pl-[12px] gap-[6px] text-base leading-none tracking-[1px]">
      <Check />
      {title}
    </div>
    {[a, b].map((l) => (
      <div key={l} className="h-[29px] flex items-center gap-[1px] text-sm leading-none">
        <span className="w-[29px]">{l}</span>
        <Spin className="w-[86px] h-[25px]" value="" />
      </div>
    ))}
  </div>
);

const OrderPanel = () => (
  <div className="w-[266px] ml-[2px] shrink-0 flex flex-col bg-white border-l-2 border-[#c8c8c8] h-full">
    <div className="h-[28px] shrink-0 flex items-center pt-[2px] border-b-2 border-t-2 border-[#b4b4b4] text-base leading-none tracking-[2px] pl-[6px]">
      <span className="w-[46px]">多单</span>
      <span className="w-[79px] text-[#f01010] font-bold text-sm">1</span>
      <span>空单</span>
    </div>
    <div className="h-[56px] shrink-0 border-b-2 border-[#b4b4b4] pl-[6px] flex flex-col">
      <div className="h-[28px] shrink-0 flex items-center">
        <Radio on label="对手价" className="w-[97px]" />
        <Radio label="挂单价" className="w-[99px]" />
        <Radio label="自定" />
      </div>
      <div className="h-[24px] shrink-0 flex items-center">
        <span className="w-[20px] text-sm leading-none pl-[3px]">价</span>
        <Spin className="w-[105px] h-[24px]" value="5052.0" />
        <span className="w-[58px] text-sm leading-none text-right pr-[5px] pl-[40px]">手</span>
        <Spin className="w-[68px] h-[24px]" value="1" />
      </div>
    </div>
    <div className="h-[108px] shrink-0 pl-[6px] flex flex-col">
      <div className="h-[31px] shrink-0 flex items-center">
        <Radio on label="开仓" className="w-[97px]" />
        <Radio label="平昨" className="w-[99px]" />
        <Radio label="平今" />
      </div>
      <div className="flex gap-[17px] h-[44px] shrink-0">
        <div className="w-[117px] bg-[#ff0000] flex flex-col items-center">
          <span className="text-[13px] font-bold text-[#ffff00] h-[17px] leading-[20px]">5052.4</span>
          <span className="text-[19px] text-white leading-[29px]">买入</span>
        </div>
        <div className="w-[117px] bg-[#00a000] flex flex-col items-center">
          <span className="text-[13px] font-bold text-[#0000f0] h-[17px] leading-[20px]">5051.8</span>
          <span className="text-[19px] text-white leading-[29px]">卖出</span>
        </div>
      </div>
      <div className="flex-1 pt-[6px] flex items-center text-base leading-none tracking-[1px]">
        <Check on className="ml-[2px] mr-[6px]" />
        <span className="w-[134px]">自动交易</span>
        <Check className="mr-[6px]" />
        <span>定时清仓</span>
      </div>
    </div>
    <div className="flex gap-[4px] flex-1">
      <StopBox title="多单启用" a="止盈" b="止损" />
      <StopBox title="空单启用" a="止损" b="止盈" />
    </div>
  </div>
);

const Amount = ({ label, value, className }) => (
  <span className={`text-xs leading-none ${className}`}>
    {label}: <span className="text-[11.5px]">{value}</span>
  </span>
);

const StatusBar = () => (
  <div className="h-[23px] relative bg-[#f0f0f0] border-t-2 border-[#d0d0d0] border-b-2 border-b-[#404040] flex items-center text-xs leading-none text-[#222] whitespace-pre shrink-0">
    <span className="w-[60px] pl-[2px] font-['Liberation_Mono','Noto_Sans_CJK_SC',monospace]">[ USD ]</span>
    <Amount label="可用" value="1000000.00" className="w-[115px]" />
    <Amount label="权益" value="1000000.00" className="w-[114px]" />
    <span className="w-[60px]">已盈  一</span>
    <span className="w-[60px]">持盈  一</span>
    <span className="w-[72px]">保证金  一</span>
    <span className="w-[71px]">总盈亏  一</span>
    <span className="w-[61px]">冻结  一</span>
    <span>手续费: 0</span>
    <span className="flex-1" />
    <span className="w-[122px] h-full pl-[2px] border-l-2 border-[#909090] flex items-center text-[13px]">[5] 切换周期</span>
    {/* csdn watermark sits over the bar and the panel above it */}
    <span className="absolute left-[1113px] top-[-6px] text-[15.5px] leading-[22px] text-white/60 [text-shadow:0_0_1px_#a0a0a0]">https://blog.csdn.net/qq_36755765</span>
  </div>
);

export default function App() {
  return (
    <div className={`w-[1366px] h-[739px] overflow-hidden flex flex-col bg-[#f0f0f0] text-black ${FONT}`}>
      <TitleBar />
      <div className="flex h-[411px] bg-black">
        <div className="w-[1163px] shrink-0 flex flex-col">
          <div className="flex"><Pane1 /><Pane2 /></div>
          <div className="flex"><Pane3 /><Pane4 /></div>
          <TabBar />
        </div>
        <QuotePanel />
      </div>
      <div className="h-[284px] flex border-t-2 border-[#808080]">
        <SideNav />
        <OrderTable />
        <OrderPanel />
      </div>
      <StatusBar />
    </div>
  );
}
